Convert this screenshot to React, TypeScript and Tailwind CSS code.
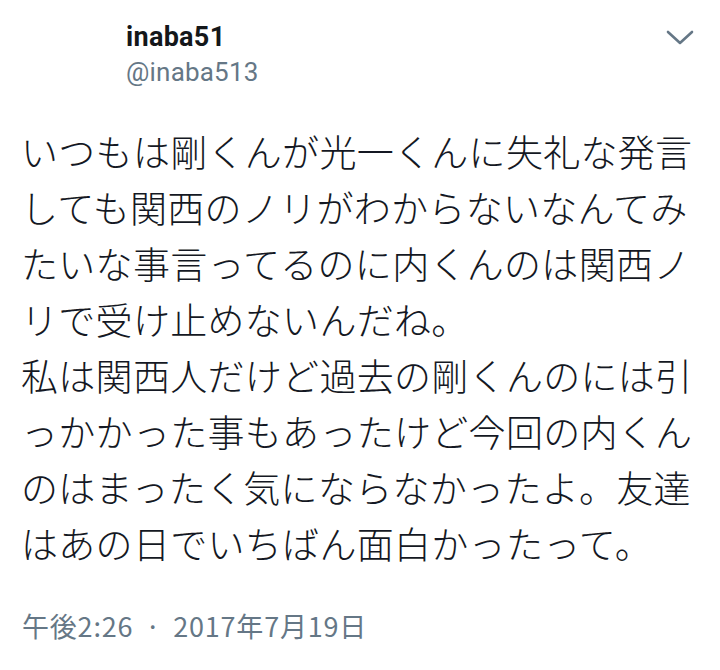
import React from 'react';

const lines = [
    'いつもは剛くんが光一くんに失礼な発言',
    'しても関西のノリがわからないなんてみ',
    'たいな事言ってるのに内くんのは関西ノ',
    'リで受け止めないんだね。',
    '私は関西人だけど過去の剛くんのには引',
    'っかかった事もあったけど今回の内くん',
    'のはまったく気にならなかったよ。友達',
    'はあの日でいちばん面白かったって。',
];

const App: React.FC = () => {
    return (
        <div className="w-[720px] h-[670px] bg-white overflow-hidden font-['Noto_Sans_CJK_JP',sans-serif]">
            {/* Header */}
            <div className="flex items-start justify-between pl-[126px] pr-[26px] pt-[19px]">
                <div className="flex flex-col">
                    <div className="text-[27px] leading-[36px] font-bold text-[#14171a] font-['Roboto',sans-serif] tracking-[0.3px]">
                        inaba51
                    </div>
                    <div className="text-[26px] leading-[34px] text-[#657786] font-['Roboto',sans-serif] tracking-[0.2px]">
                        @inaba513
                    </div>
                </div>
                <svg className="mt-[10px]" width="28" height="18" viewBox="0 0 28 18" fill="none" stroke="#657786" strokeWidth="2.6" strokeLinecap="round" strokeLinejoin="round">
                    <path d="M2 3 L14 14 L26 3" />
                </svg>
            </div>

            {/* Body */}
            <div className="pl-[21px] pt-[34px] text-[37px] leading-[56px] font-light text-[#141823] tracking-[0.3px] whitespace-nowrap">
                {lines.map((l, i) => (
                    <div key={i}>{l}</div>
                ))}
            </div>

            {/* Footer */}
            <div className="flex items-center pl-[22px] pt-[38px] text-[27px] leading-[34px] text-[#657786] tracking-[0.8px] whitespace-nowrap">
                <span>午後2:26</span>
                <span className="mx-[12px]">·</span>
                <span>2017年7月19日</span>
            </div>
        </div>
    );
};

export default App;
